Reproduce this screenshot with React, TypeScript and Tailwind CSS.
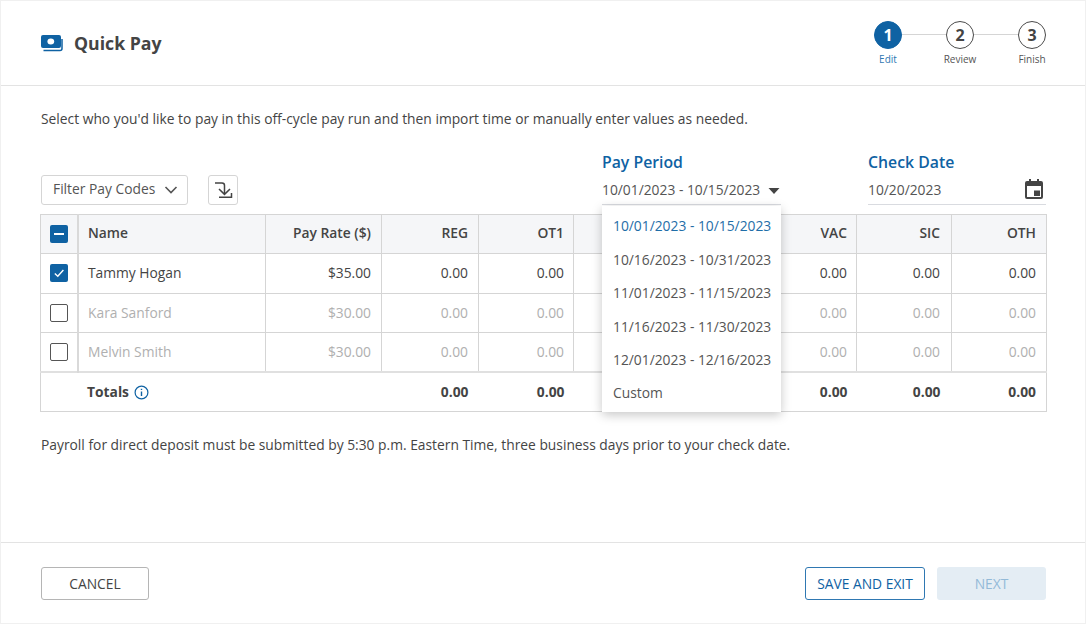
import React from "react";

const periods = [
  "10/01/2023 - 10/15/2023",
  "10/16/2023 - 10/31/2023",
  "11/01/2023 - 11/15/2023",
  "11/16/2023 - 11/30/2023",
  "12/01/2023 - 12/16/2023",
  "Custom",
];

// the two middle columns sit under the open dropdown, so their text is never seen
const codes = ["REG", "OT1", "", "", "VAC", "SIC", "OTH"];
const widths = ["w-[97px]", "w-[95px]", "w-[95px]", "w-[94px]", "w-[94px]", "w-[95px]", "w-[95px]"];
const pads = ["pr-[10px]", "pr-[9px]", "pr-[10px]", "pr-[10px]", "pr-[9px]", "pr-[11px]", "pr-[10px]"];

const people = [
  { name: "Tammy Hogan", rate: "$35.00", active: true },
  { name: "Kara Sanford", rate: "$30.00", active: false },
  { name: "Melvin Smith", rate: "$30.00", active: false },
];

const Step = ({ n, label, active }: { n: number; label: string; active?: boolean }) => (
  <div className="flex w-[28px] flex-col items-center">
    <div
      className={
        active
          ? "flex h-[28px] w-[28px] items-center justify-center rounded-full border border-[#0f62a3] bg-[#0f62a3] text-[16px] font-bold text-white"
          : "flex h-[28px] w-[28px] items-center justify-center rounded-full border border-[#4a4a4a] bg-white text-[16px] font-bold text-[#444]"
      }
    >
      {n}
    </div>
    <span
      className={
        active
          ? "mt-[2px] whitespace-nowrap text-[10px] leading-[16px] text-[#2f78b2]"
          : "mt-[2px] whitespace-nowrap text-[10px] leading-[16px] text-[#555]"
      }
    >
      {label}
    </span>
  </div>
);

const Check = ({ state }: { state: "on" | "off" | "some" }) => {
  if (state === "off") {
    return <div className="mx-auto h-[18px] w-[18px] rounded-[2px] border border-[#555] bg-white" />;
  }
  return (
    <div className="mx-auto flex h-[18px] w-[18px] items-center justify-center rounded-[2px] bg-[#0f62a3]">
      {state === "on" ? (
        <svg width="12" height="12" viewBox="0 0 12 12" fill="none" stroke="white" strokeWidth="1.4">
          <path d="M1.8 6.5 L4.8 9.2 L10.4 3" />
        </svg>
      ) : (
        <div className="h-[2px] w-[10px] bg-white" />
      )}
    </div>
  );
};

export default function App() {
  return (
    <div className="flex h-[624px] w-[1086px] flex-col overflow-hidden border border-[#f0f0f0] bg-white font-['Open_Sans',sans-serif] text-[#444]">
      <header className="flex h-[85px] shrink-0 items-start justify-between border-b border-[#e3e3e3] pl-[40px] pr-[39px]">
        <div className="mt-[29px] flex items-center gap-[11px]">
          <svg width="22" height="17" viewBox="0 0 22 17">
            <rect x="0" y="0" width="20" height="13" rx="2" fill="#0f62a3" />
            <ellipse cx="9.8" cy="6.5" rx="3.4" ry="3" fill="white" />
            <path d="M2.5 15.6 H19 a2 2 0 0 0 2 -2 V4" fill="none" stroke="#0f62a3" strokeWidth="1.5" />
          </svg>
          <h1 className="text-[17.7px] font-bold leading-[26px] text-[#444]">Quick Pay</h1>
        </div>
        <div className="mt-[20px] flex items-start">
          <Step n={1} label="Edit" active />
          <div className="mt-[13px] h-px w-[44px] bg-[#d5d5d5]" />
          <Step n={2} label="Review" />
          <div className="mt-[13px] h-px w-[44px] bg-[#d5d5d5]" />
          <Step n={3} label="Finish" />
        </div>
      </header>

      <main className="flex-1 pl-[40px] pr-[39px]">
        <p className="mt-[23px] text-[13.82px] leading-[20px] text-[#444]">
          Select who you'd like to pay in this off-cycle pay run and then import time or manually enter values as needed.
        </p>

        <div className="mt-[22px] flex h-[62px] items-start">
          <div className="mt-[24px] flex items-center">
            <button className="flex h-[30px] w-[147px] items-center justify-between rounded-[3px] border border-[#d5d5d5] pb-[1px] pl-[11px] pr-[9px] text-[13.82px] text-[#555]">
              Filter Pay Codes
              <svg width="14" height="8" viewBox="0 0 14 8" fill="none" stroke="#555" strokeWidth="1.6">
                <path d="M1.5 1 L7 6.5 L12.5 1" />
              </svg>
            </button>
            <button className="ml-[20px] flex h-[30px] w-[30px] items-center justify-center rounded-[3px] border border-[#d5d5d5]">
              <svg width="22" height="18" viewBox="0 0 22 18" fill="none" stroke="#444" strokeWidth="1.5">
                <path d="M3 2 H10 a2.5 2.5 0 0 1 2.5 2.5 V13" />
                <path d="M7 8 L12.5 13.4 L18 8" />
                <path d="M7 16.2 H19.5 V12" />
              </svg>
            </button>
          </div>

          <div className="relative ml-[364px] w-[179px]">
            <div className="text-[15.8px] font-semibold leading-[22px] text-[#0f62a3]">Pay Period</div>
            <div className="mt-[4px] flex h-[28px] items-center justify-between border-b border-[#d9dbe0] pr-[1px] text-[13.82px] text-[#555]">
              10/01/2023 - 10/15/2023
              <svg width="12" height="6" viewBox="0 0 12 6">
                <path d="M0.5 0 H11.5 L6 6 Z" fill="#444" />
              </svg>
            </div>
            <ul className="absolute left-0 top-[55px] z-10 w-[179px] bg-white pb-[2px] pt-[4px] shadow-[0_3px_10px_rgba(0,0,0,0.22)]">
              {periods.map((p, i) => (
                <li
                  key={p}
                  className={
                    i === 0
                      ? "flex h-[33.4px] items-center pl-[11px] text-[13.82px] text-[#1f6ea8]"
                      : "flex h-[33.4px] items-center pl-[11px] text-[13.82px] text-[#555]"
                  }
                >
                  {p}
                </li>
              ))}
            </ul>
          </div>

          <div className="ml-[87px] w-[178px]">
            <div className="text-[15.8px] font-semibold leading-[22px] text-[#0f62a3]">Check Date</div>
            <div className="mt-[4px] flex h-[28px] items-center justify-between border-b border-[#d9dbe0] text-[13.82px] text-[#555]">
              10/20/2023
              <svg width="18" height="20" viewBox="0 0 18 20" className="mr-[3px] mt-[-4px]">
                <path
                  fillRule="evenodd"
                  fill="#444"
                  d="M4 0 H6 V2 H12 V0 H14 V2 H16 a2 2 0 0 1 2 2 V18 a2 2 0 0 1 -2 2 H2 a2 2 0 0 1 -2 -2 V4 a2 2 0 0 1 2 -2 H4 Z M2 7 V18 H16 V7 Z M9 11.5 H15 V17 H9 Z"
                />
              </svg>
            </div>
          </div>
        </div>

        <table className="-ml-px mt-[1px] w-[1006px] table-fixed border-collapse border border-[#d5d5d5] text-[13.82px]">
          <colgroup>
            <col className="w-[37px]" />
            <col className="w-[188px]" />
            <col className="w-[116px]" />
            {widths.map((w, i) => (
              <col key={i} className={w} />
            ))}
          </colgroup>
          <thead>
            <tr className="h-[39px] bg-[#f5f6f8] text-[#444]">
              <th className="border-r-2 border-[#d9d9d9] p-0">
                <Check state="some" />
              </th>
              <th className="border-r border-[#d5d5d5] pb-[1px] pl-[9.5px] text-left font-semibold">Name</th>
              <th className="border-r border-[#d5d5d5] pb-[1px] pr-[10px] text-right font-semibold">Pay Rate ($)</th>
              {codes.map((c, i) => (
                <th
                  key={i}
                  className={
                    i === codes.length - 1
                      ? `${pads[i]} pb-[1px] text-right font-semibold`
                      : `${pads[i]} border-r border-[#d5d5d5] pb-[1px] text-right font-semibold`
                  }
                >
                  {c}
                </th>
              ))}
            </tr>
          </thead>
          <tbody>
            {people.map((p) => (
              <tr
                key={p.name}
                className={
                  p.active
                    ? "h-[39.5px] border-t border-[#d5d5d5] text-[#444]"
                    : "h-[39.5px] border-t border-[#d5d5d5] text-[#b0b0b0]"
                }
              >
                <td className="border-r-2 border-[#d9d9d9] p-0">
                  <Check state={p.active ? "on" : "off"} />
                </td>
                <td className="border-r border-[#d5d5d5] pl-[9.5px] pt-[1px]">{p.name}</td>
                <td className="border-r border-[#d5d5d5] pr-[10px] pt-[1px] text-right">{p.rate}</td>
                {codes.map((c, i) => (
                  <td
                    key={i}
                    className={
                      i === codes.length - 1
                        ? `${pads[i]} pt-[1px] text-right`
                        : `${pads[i]} border-r border-[#d5d5d5] pt-[1px] text-right`
                    }
                  >
                    {c && "0.00"}
                  </td>
                ))}
              </tr>
            ))}
            <tr className="h-[39px] border-t-2 border-[#e0e0e0] font-bold text-[#444]">
              <td />
              <td className="pl-[9.5px] pt-[1px]">
                <span className="flex items-center gap-[5px]">
                  Totals
                  <svg width="15" height="15" viewBox="0 0 15 15" fill="none" stroke="#0f62a3">
                    <circle cx="7.5" cy="7.5" r="6.4" strokeWidth="1.2" />
                    <path d="M7.5 6.5 V11" strokeWidth="1.4" />
                    <path d="M7.5 3.8 V5" strokeWidth="1.4" />
                  </svg>
                </span>
              </td>
              <td />
              {codes.map((c, i) => (
                <td key={i} className={`${pads[i]} pt-[1px] text-right`}>
                  {c && "0.00"}
                </td>
              ))}
            </tr>
          </tbody>
        </table>

        <p className="mt-[23px] text-[13.82px] leading-[20px] text-[#444]">
          Payroll for direct deposit must be submitted by 5:30 p.m. Eastern Time, three business days prior to your check date.
        </p>
      </main>

      <footer className="flex h-[81px] shrink-0 items-start justify-between border-t border-[#e3e3e3] pl-[40px] pr-[39px] pt-[24px]">
        <button className="h-[33px] w-[108px] rounded-[3px] border border-[#b5b5b5] pt-[1px] text-[13.82px] text-[#444]">CANCEL</button>
        <div className="flex gap-[12px]">
          <button className="h-[33px] w-[120px] rounded-[3px] border border-[#2f78b2] pt-[1px] text-[13.82px] text-[#0f62a3]">SAVE AND EXIT</button>
          <button className="h-[33px] w-[109px] rounded-[3px] bg-[#e4edf4] pt-[1px] text-[13.82px] text-[#93bad8]">NEXT</button>
        </div>
      </footer>
    </div>
  );
}
